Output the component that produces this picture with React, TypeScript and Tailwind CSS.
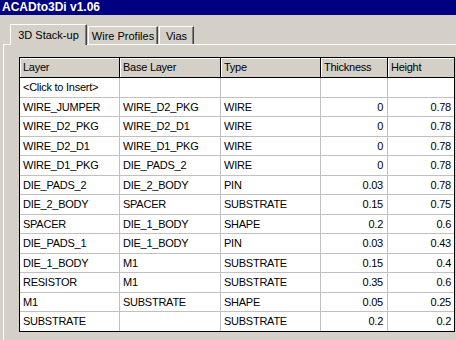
import React from "react";

const rows: string[][] = [
  ["<Click to Insert>", "", "", "", ""],
  ["WIRE_JUMPER", "WIRE_D2_PKG", "WIRE", "0", "0.78"],
  ["WIRE_D2_PKG", "WIRE_D2_D1", "WIRE", "0", "0.78"],
  ["WIRE_D2_D1", "WIRE_D1_PKG", "WIRE", "0", "0.78"],
  ["WIRE_D1_PKG", "DIE_PADS_2", "WIRE", "0", "0.78"],
  ["DIE_PADS_2", "DIE_2_BODY", "PIN", "0.03", "0.78"],
  ["DIE_2_BODY", "SPACER", "SUBSTRATE", "0.15", "0.75"],
  ["SPACER", "DIE_1_BODY", "SHAPE", "0.2", "0.6"],
  ["DIE_PADS_1", "DIE_1_BODY", "PIN", "0.03", "0.43"],
  ["DIE_1_BODY", "M1", "SUBSTRATE", "0.15", "0.4"],
  ["RESISTOR", "M1", "SUBSTRATE", "0.35", "0.6"],
  ["M1", "SUBSTRATE", "SHAPE", "0.05", "0.25"],
  ["SUBSTRATE", "", "SUBSTRATE", "0.2", "0.2"],
];

const headers = ["Layer", "Base Layer", "Type", "Thickness", "Height"];

export default function App() {
  return (
    <div className="w-[456px] h-[340px] overflow-hidden bg-[#d4d0c8] font-['Liberation_Sans',Arial,sans-serif] text-[11px] text-black">
      <div className="h-[15px] bg-[#000080] text-white font-bold text-[12px] leading-[15px] pl-[2px] whitespace-nowrap">
        ACADto3Di v1.06
      </div>
      <div className="h-[29px] flex items-end pl-[10px]">
        <div className="relative z-10 -mb-px w-[77px] h-[21px] bg-[#d4d0c8] border-t border-l border-r border-t-white border-l-white border-r-[#404040] shadow-[inset_-1px_0_0_#808080] text-center pt-[4px] leading-[13px] whitespace-nowrap">
          3D Stack-up
        </div>
        <div className="ml-px w-[70px] h-[18px] border-t border-l border-r border-t-white border-l-white border-r-[#404040] shadow-[inset_-1px_0_0_#808080] text-center pt-[3px] leading-[13px] whitespace-nowrap">
          Wire Profiles
        </div>
        <div className="ml-px w-[35px] h-[18px] border-t border-l border-r border-t-white border-l-white border-r-[#404040] shadow-[inset_-1px_0_0_#808080] text-center pt-[3px] leading-[13px] whitespace-nowrap">
          Vias
        </div>
      </div>
      <div className="ml-[3px] h-[300px] border-t border-l border-white pt-[12px] pl-[15px]">
        <div className="w-[436px] h-[275px] border border-black bg-white flex flex-col overflow-hidden tracking-[-0.25px]">
          <div className="grid grid-cols-[100px_101px_100px_67px_66px] h-[20px] border-b border-black bg-[#d4d0c8] shrink-0">
            {headers.map((h, i) => (
              <div
                key={h}
                className={`h-[19px] pl-[3px] leading-[18px] shadow-[inset_1px_1px_0_#fff] whitespace-nowrap overflow-hidden ${i < 4 ? "border-r border-black" : ""}`}
              >
                {h}
              </div>
            ))}
          </div>
          <div className="flex-1 overflow-hidden">
            {rows.map((r, ri) => (
              <div
                key={ri}
                className="grid grid-cols-[100px_101px_100px_67px_66px] h-[19.5px] border-b border-[#c0c0c0]"
              >
                {r.map((c, ci) => (
                  <div
                    key={ci}
                    className={`h-[18.5px] leading-[18.5px] whitespace-nowrap overflow-hidden ${ci < 4 ? "border-r border-[#c0c0c0]" : ""} ${ci >= 3 ? "text-right" : "pl-[3px]"} ${ci === 3 ? "pr-[4px]" : ""} ${ci === 4 ? "pr-[3px]" : ""}`}
                  >
                    {c}
                  </div>
                ))}
              </div>
            ))}
          </div>
        </div>
      </div>
    </div>
  );
}
